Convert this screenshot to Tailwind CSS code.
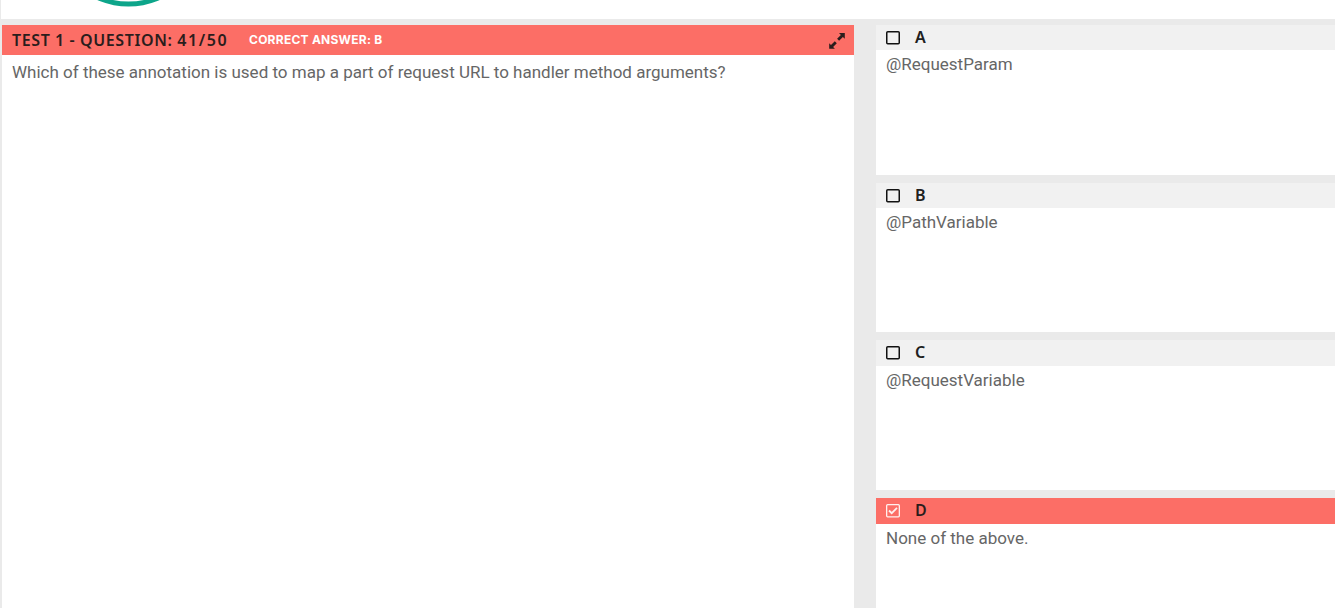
<!DOCTYPE html>
<html lang="en">
<head>
<meta charset="utf-8">
<title>Test 1</title>
<script src="https://cdn.jsdelivr.net/npm/@tailwindcss/browser@4"></script>
</head>
<body class="flex h-[608px] w-[1335px] flex-col overflow-hidden bg-[#eaeaea] font-['Roboto',sans-serif] text-[17px] text-[#666666]">
<header class="ml-px h-[19px] shrink-0 overflow-hidden bg-white">
  <svg class="ml-[87px]" width="82" height="19" viewBox="88 0 82 19" fill="none"><circle cx="128.5" cy="-72" r="76" stroke="#0da58a" stroke-width="5"/></svg>
</header>
<main class="flex min-h-0 flex-1 gap-[22px] pl-0.5 pt-1.5">
  <section class="flex w-[852px] shrink-0 flex-col bg-white">
    <div class="flex h-[30px] shrink-0 items-center bg-[#fc6e66] px-2.5 font-['Noto_Sans',sans-serif]">
      <h1 class="w-[237px] whitespace-nowrap text-[16px] font-semibold leading-[30px] tracking-[0.6px] text-[#2b1d1c]">TEST 1 - QUESTION: <span class="tracking-[1.6px]">41/50</span></h1>
      <span class="whitespace-nowrap font-['Inter',sans-serif] text-[12px] font-bold leading-[28px] tracking-[0.25px] text-white">CORRECT ANSWER: B</span>
      <svg class="ml-auto mr-[-1px] mt-0.5" width="16" height="16" viewBox="0 0 16 16" fill="#2b1d1c"><path d="M10 0h5.8v5.8L13.9 4l-3.8 3.7-2-2L11.9 2zM.2 10.2 2 12l3.8-3.8 2 2L4.1 14l1.8 1.8H.2z"/></svg>
    </div>
    <p class="px-2.5 pt-[5px] leading-6 whitespace-nowrap">Which of these annotation is used to map a part of request URL to handler method arguments?</p>
  </section>
  <section class="flex min-w-0 flex-1 flex-col">
    <article class="mb-2 h-[150px] shrink-0 bg-white">
      <div class="flex h-[25px] items-start gap-[15px] bg-[#f1f1f1] pl-2.5"><svg class="mt-1.5" width="14" height="14" viewBox="0 0 14 14" fill="none" stroke="#111" stroke-width="1.5"><rect x=".75" y=".75" width="12.5" height="12" rx="1"/></svg><h2 class="font-['Noto_Sans',sans-serif] text-[16px] font-semibold leading-6 text-[#202020]">A</h2></div>
      <p class="px-2.5 pt-0.5 leading-6">@RequestParam</p>
    </article>
    <article class="mb-2 h-[149px] shrink-0 bg-white">
      <div class="flex h-[25px] items-start gap-[15px] bg-[#f1f1f1] pl-2.5"><svg class="mt-1.5" width="14" height="14" viewBox="0 0 14 14" fill="none" stroke="#111" stroke-width="1.5"><rect x=".75" y=".75" width="12.5" height="12" rx="1"/></svg><h2 class="font-['Noto_Sans',sans-serif] text-[16px] font-semibold leading-6 text-[#202020]">B</h2></div>
      <p class="px-2.5 pt-0.5 leading-6">@PathVariable</p>
    </article>
    <article class="mb-2 h-[150px] shrink-0 bg-white">
      <div class="flex h-[26px] items-start gap-[15px] bg-[#f1f1f1] pl-2.5"><svg class="mt-1.5" width="14" height="14" viewBox="0 0 14 14" fill="none" stroke="#111" stroke-width="1.5"><rect x=".75" y=".75" width="12.5" height="12" rx="1"/></svg><h2 class="font-['Noto_Sans',sans-serif] text-[16px] font-semibold leading-6 text-[#202020]">C</h2></div>
      <p class="px-2.5 pt-0.5 leading-6">@RequestVariable</p>
    </article>
    <article class="min-h-0 flex-1 bg-white">
      <div class="flex h-[26px] items-start gap-[15px] bg-[#fc6e66] pl-2.5"><svg class="mt-1.5" width="14" height="14" viewBox="0 0 14 14" fill="none" stroke="#fff0ee" stroke-width="1.3"><rect x=".65" y=".65" width="12.7" height="12.2" rx="1"/><path d="m3 6.5 2.7 2.7L11 3.9" stroke-width="1.8"/></svg><h2 class="font-['Noto_Sans',sans-serif] text-[16px] font-semibold leading-6 text-[#2b1d1c]">D</h2></div>
      <p class="px-2.5 pt-0.5 leading-6">None of the above.</p>
    </article>
  </section>
</main>
</body>
</html>
